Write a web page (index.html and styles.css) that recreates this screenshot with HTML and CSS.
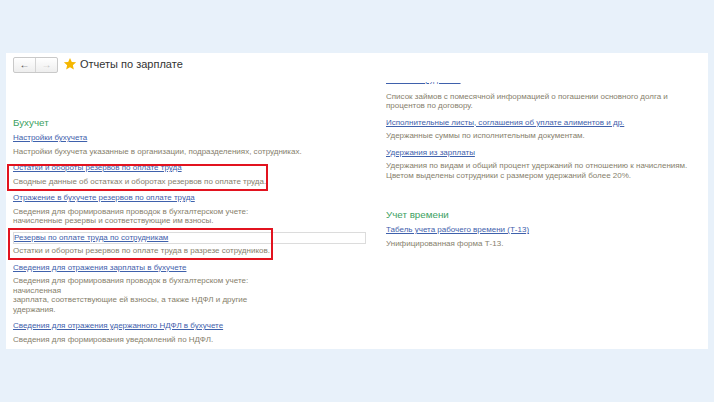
FILE: index.html
```html
<!DOCTYPE html>
<html lang="ru">
<head>
  <meta charset="UTF-8">
  <link rel="stylesheet" href="styles.css">
</head>
<body>

<div class="panel">
  <div class="head">
    <div class="nav">
      <span class="navbtn back">&#8592;</span>
      <span class="navbtn fwd">&#8594;</span>
    </div>
    <svg class="star" width="14" height="14" viewBox="0 0 24 24">
      <path d="M12 1.5l3.1 6.9 7.4.7-5.6 5 1.7 7.4L12 17.6l-6.6 3.9 1.7-7.4-5.6-5 7.4-.7z" fill="#f5b700"/>
    </svg>
    <div class="title">Отчеты по зарплате</div>
  </div>

  <div class="cols">
    <!-- left column -->
    <div class="col left">
      <div class="group">Бухучет</div>

      <div class="item">
        <a class="link">Настройки бухучета</a>
        <div class="desc">Настройки бухучета указанные в организации, подразделениях, сотрудниках.</div>
      </div>

      <div class="item">
        <a class="link">Остатки и обороты резервов по оплате труда</a>
        <div class="desc">Сводные данные об остатках и оборотах резервов по оплате труда.</div>
        <span class="mark mark1"></span>
      </div>

      <div class="item">
        <a class="link">Отражение в бухучете резервов по оплате труда</a>
        <div class="desc">Сведения для формирования проводок в бухгалтерском учете:<br>начисленные резервы и соответствующие им взносы.</div>
      </div>

      <div class="item">
        <div class="current"><a class="link">Резервы по оплате труда по сотрудникам</a></div>
        <div class="desc">Остатки и обороты резервов по оплате труда в разрезе сотрудников.</div>
        <span class="mark mark2"></span>
      </div>

      <div class="item">
        <a class="link">Сведения для отражения зарплаты в бухучете</a>
        <div class="desc">Сведения для формирования проводок в бухгалтерском учете:<br>начисленная<br>зарплата, соответствующие ей взносы, а также НДФЛ и другие<br>удержания.</div>
      </div>

      <div class="item">
        <a class="link">Сведения для отражения удержанного НДФЛ в бухучете</a>
        <div class="desc">Сведения для формирования уведомлений по НДФЛ.</div>
      </div>
    </div>

    <!-- right column, scrolled down a bit -->
    <div class="col right">
      <div class="clip">
        <div class="scrolled">
          <div class="item first">
            <a class="link">Займы сотрудникам</a>
            <div class="desc">Список займов с помесячной информацией о погашении основного долга и<br>процентов по договору.</div>
          </div>

          <div class="item">
            <a class="link">Исполнительные листы, соглашения об уплате алиментов и др.</a>
            <div class="desc">Удержанные суммы по исполнительным документам.</div>
          </div>

          <div class="item">
            <a class="link">Удержания из зарплаты</a>
            <div class="desc">Удержания по видам и общий процент удержаний по отношению к начислениям.<br>Цветом выделены сотрудники с размером удержаний более 20%.</div>
          </div>

          <div class="group time">Учет времени</div>

          <div class="item">
            <a class="link">Табель учета рабочего времени (Т-13)</a>
            <div class="desc">Унифицированная форма Т-13.</div>
          </div>
        </div>
      </div>
    </div>
  </div>
</div>

</body>
</html>
```

FILE: styles.css
```css
body { margin: 0; background: #e8f1fa; font-family: "Liberation Sans", Arial, sans-serif; height: 402px; overflow: hidden; padding-top: 53px; box-sizing: border-box; }

.panel {
  margin-left: 6px;
  width: 702px;
  height: 296px;
  background: #fff;
  overflow: hidden;
}

.head {
  display: flex;
  height: 28px;
  padding: 4px 0 0 7px;
  box-sizing: border-box;
  align-items: flex-start;
}
.nav {
  display: flex;
  border: 1px solid #c9c9c9;
  border-radius: 2px;
  background: linear-gradient(#ffffff, #eeeeee);
  height: 14px;
}
.navbtn {
  width: 21px;
  text-align: center;
  font-size: 10px;
  line-height: 14px;
  color: #444;
}
.navbtn.fwd { color: #c2c2c2; border-left: 1px solid #d4d4d4; }
.star { margin: 0 0 0 5px; }
.title { margin-left: 3px; font-size: 11px; line-height: 15px; color: #333; }

.cols { display: flex; height: 268px; }
.col { overflow: hidden; }
.left { width: 373px; padding: 35px 0 0 7px; }
.right { flex: 1; padding-top: 1px; }
.clip { overflow: hidden; height: 260px; }
.scrolled { margin-top: -8px; }

.group {
  font-size: 9.8px;
  line-height: 14px;
  color: #3c9f61;
  margin-bottom: 2px;
}
.group.time { margin-top: 28px; }

.item { position: relative; margin-bottom: 6px; }
.link {
  display: block;
  font-size: 8px;
  line-height: 12px;
  color: #3f61ac;
  text-decoration: underline;
}
.desc {
  margin-top: 2.5px;
  font-size: 8px;
  line-height: 9.5px;
  color: #86806c;
}
.first .desc { margin-top: 5.5px; }

.current {
  width: 353px;
  height: 12px;
  border: 1px solid #dcdcdc;
  box-sizing: border-box;
}
.current .link { line-height: 10px; }

.mark {
  position: absolute;
  border: 2px solid #e2131f;
  box-sizing: border-box;
}
.mark1 { left: -6px; top: 2px; width: 261px; height: 27px; }
.mark2 { left: -5px; top: -3.5px; width: 265px; height: 32px; }
```
